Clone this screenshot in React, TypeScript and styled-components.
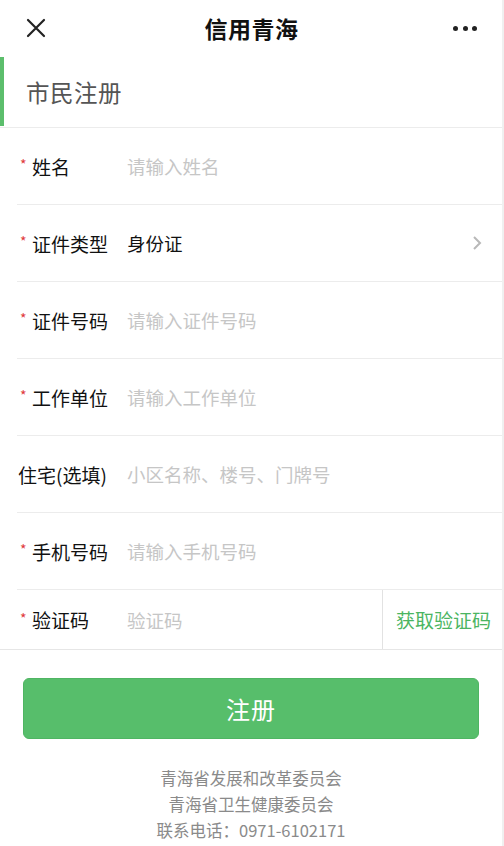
import React from 'react'
import styled, { createGlobalStyle } from 'styled-components'

const GlobalStyle = createGlobalStyle`
    html, body {
        margin: 0;
        padding: 0;
        background: #fff;
    }
    body {
        font-family: "Noto Sans CJK SC", "Noto Sans", sans-serif;
        -webkit-font-smoothing: antialiased;
    }
    * {
        box-sizing: border-box;
    }
`

const Page = styled.div`
    width: 504px;
    min-height: 846px;
    background: #fff;
    border-right: 2px solid #f0f0f0;
`

const NavBar = styled.header`
    height: 56px;
    display: flex;
    align-items: center;
    justify-content: space-between;
    padding: 0 25px 0 24px;
`

const NavTitle = styled.h1`
    margin: 0 0 0 2px;
    font-size: 23px;
    font-weight: 700;
    color: #111;
    letter-spacing: 0.5px;
`

const NavButton = styled.button`
    width: 24px;
    height: 24px;
    padding: 0;
    border: none;
    background: none;
    display: flex;
    align-items: center;
    justify-content: center;
`

const Dots = styled.div`
    display: flex;
    gap: 4.5px;
    align-items: center;
    span {
        width: 5px;
        height: 5px;
        border-radius: 50%;
        background: #222;
    }
`

const SectionTitle = styled.div`
    height: 72px;
    display: flex;
    align-items: center;
    border-bottom: 1px solid #ececec;
    h2 {
        margin: 0;
        height: 69px;
        display: flex;
        align-items: center;
        padding-left: 22px;
        border-left: 4px solid #5cbe6c;
        font-size: 23.5px;
        font-weight: 400;
        color: #555;
        letter-spacing: 0.5px;
    }
`

const Row = styled.label`
    height: 77px;
    margin-left: 17px;
    padding-left: 1px;
    display: flex;
    align-items: center;
    border-bottom: 1px solid #ececec;
`

const CodeRow = styled.div`
    height: 60px;
    padding-left: 18px;
    display: flex;
    align-items: center;
    border-bottom: 1px solid #e6e6e6;
`

const Label = styled.span`
    width: 109px;
    flex-shrink: 0;
    display: flex;
    align-items: center;
    font-size: 19px;
    color: #111;
`

const Required = styled.i`
    width: 14px;
    font-style: normal;
    font-size: 14px;
    color: #e0393b;
    padding-left: 2px;
    margin-top: -4px;
`

const Input = styled.input`
    flex: 1;
    min-width: 0;
    border: none;
    outline: none;
    padding: 0;
    background: transparent;
    font-family: inherit;
    font-size: 18.5px;
    color: #111;
    &::placeholder {
        color: #c6c6c6;
    }
`

const SelectValue = styled.span`
    flex: 1;
    font-size: 18.5px;
    color: #111;
`

const Chevron = styled.span`
    width: 24px;
    margin-right: 13px;
    display: flex;
    justify-content: center;
`

const CodeButton = styled.button`
    width: 120px;
    height: 100%;
    flex-shrink: 0;
    border: none;
    border-left: 1px solid #e2e2e2;
    background: none;
    padding: 0 0 0 2px;
    font-family: inherit;
    font-size: 19px;
    color: #4bb562;
`

const Submit = styled.button`
    display: block;
    width: 456px;
    height: 61px;
    margin: 28px 0 0 23px;
    border: 1px solid #4fb563;
    border-radius: 6px;
    background: #57be6b;
    font-family: inherit;
    font-size: 24px;
    color: #fff;
    letter-spacing: 1px;
`

const Footer = styled.footer`
    margin-top: 26px;
    text-align: center;
    font-size: 16.5px;
    line-height: 26px;
    color: #8a8a8a;
    p {
        margin: 0;
    }
`

type Field = {
    label: string
    placeholder: string
    required?: boolean
}

const topFields: Field[] = [{ label: '姓名', placeholder: '请输入姓名', required: true }]

const restFields: Field[] = [
    { label: '证件号码', placeholder: '请输入证件号码', required: true },
    { label: '工作单位', placeholder: '请输入工作单位', required: true },
    { label: '住宅(选填)', placeholder: '小区名称、楼号、门牌号' },
    { label: '手机号码', placeholder: '请输入手机号码', required: true },
]

const FieldRow = ({ label, placeholder, required }: Field) => (
    <Row>
        <Label>
            {required && <Required>*</Required>}
            {label}
        </Label>
        <Input placeholder={placeholder} />
    </Row>
)

const App = () => (
    <Page>
        <GlobalStyle />
        <NavBar>
            <NavButton aria-label="关闭">
                <svg width="20" height="20" viewBox="0 0 20 20">
                    <path d="M2 2 L18 18 M18 2 L2 18" stroke="#222" strokeWidth="2.2" strokeLinecap="round" />
                </svg>
            </NavButton>
            <NavTitle>信用青海</NavTitle>
            <Dots>
                <span />
                <span />
                <span />
            </Dots>
        </NavBar>

        <SectionTitle>
            <h2>市民注册</h2>
        </SectionTitle>

        {topFields.map((f) => (
            <FieldRow key={f.label} {...f} />
        ))}

        <Row>
            <Label>
                <Required>*</Required>
                证件类型
            </Label>
            <SelectValue>身份证</SelectValue>
            <Chevron>
                <svg width="10" height="16" viewBox="0 0 10 16">
                    <path d="M2 2 L8 8 L2 14" fill="none" stroke="#b8b8b8" strokeWidth="2" />
                </svg>
            </Chevron>
        </Row>

        {restFields.map((f) => (
            <FieldRow key={f.label} {...f} />
        ))}

        <CodeRow>
            <Label>
                <Required>*</Required>
                验证码
            </Label>
            <Input placeholder="验证码" />
            <CodeButton>获取验证码</CodeButton>
        </CodeRow>

        <Submit>注册</Submit>

        <Footer>
            <p>青海省发展和改革委员会</p>
            <p>青海省卫生健康委员会</p>
            <p>联系电话：0971-6102171</p>
        </Footer>
    </Page>
)

export default App
